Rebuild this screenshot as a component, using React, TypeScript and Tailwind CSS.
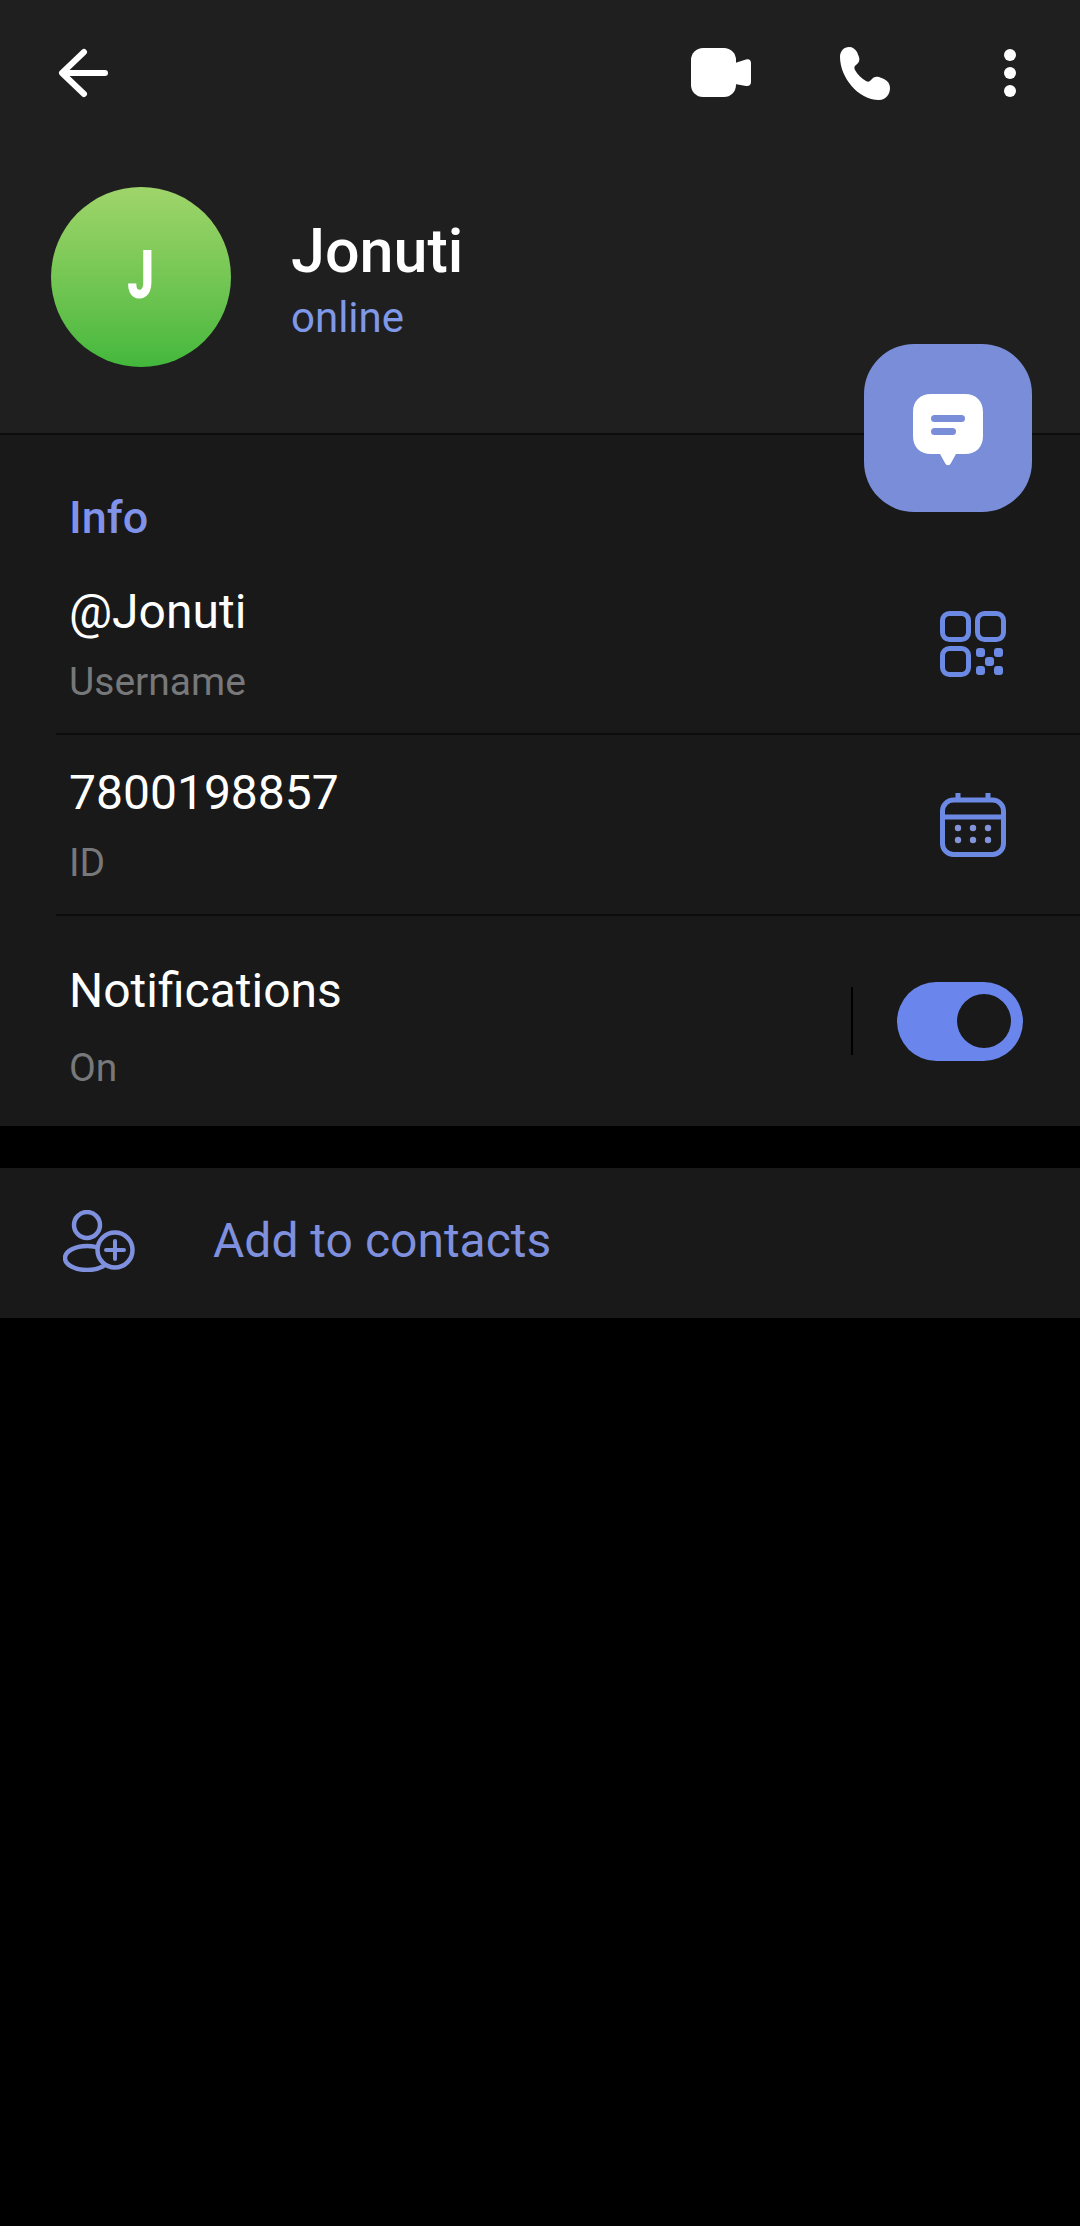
const font = { fontFamily: "Roboto, sans-serif" };

export default function App() {
  return (
    <div style={font} className="relative w-[1080px] h-[2226px] bg-black overflow-hidden font-['Roboto']">
      <header className="h-[435px] bg-[#1f1f1f] border-b-2 border-[#0c0c0c] flex flex-col">
        <div className="h-[146px] flex items-center pl-[58px] pr-[64px]">
          <svg width="50" height="50" viewBox="0 0 50 50" fill="none" stroke="white" strokeWidth="6" strokeLinecap="round" strokeLinejoin="round">
            <path d="M26 4 4 25l22 21M5 25h42" />
          </svg>
          <div className="ml-auto flex items-center">
            <svg width="60" height="50" viewBox="0 0 60 50" fill="white">
              <rect x="0" y="0" width="45" height="49" rx="12" />
              <path d="M44 15 55 11.500c3-1 5 .5 5 3.500v19c0 3-2 4.500-5 4l-11-2Z" />
            </svg>
            <svg className="ml-[87px]" width="54" height="54" viewBox="0 0 54 54" fill="white">
              <path d="M2 11C2 5 6 1 11 1c4 0 6 2 8 5l2 5c1 3 0 6-3 8-2 1-2 3-1 5 3 5 6 8 11 11 2 1 3 1 5-1 2-3 5-4 8-3l5 2c4 2 6 5 6 9 0 6-4 12-11 12C20 54 2 31 2 11Z" />
            </svg>
            <div className="ml-[112px] w-[12px] flex flex-col gap-[6px]">
              <div className="w-[12px] h-[12px] rounded-full bg-white" />
              <div className="w-[12px] h-[12px] rounded-full bg-white" />
              <div className="w-[12px] h-[12px] rounded-full bg-white" />
            </div>
          </div>
        </div>
        <div className="mt-[41px] pl-[51px] flex items-center">
          <div className="w-[180px] h-[180px] rounded-full bg-gradient-to-b from-[#9fd56b] to-[#42b83c] flex items-center justify-center text-white">
            <span className="text-[66px] leading-none font-black scale-x-[0.72] inline-block -mt-[2px]">J</span>
          </div>
          <div className="ml-[60px] flex flex-col pt-[6px]">
            <div className="text-[61px] leading-[66px] font-medium text-white">Jonuti</div>
            <div className="text-[42px] leading-[48px] mt-[10px] text-[#7f98e8]">online</div>
          </div>
        </div>
      </header>

      <section className="bg-[#191919] h-[691px] flex flex-col">
        <div className="h-[119px] pl-[69px] pt-[58px] text-[45px] leading-[50px] font-medium text-[#8093e8]">Info</div>
        <div className="ml-[56px] h-[181px] flex items-center justify-between pl-[13px] pr-[74px] border-b-2 border-[#0c0c0c]">
          <div className="flex flex-col">
            <div className="text-[48px] leading-[56px] text-white">@Jonuti</div>
            <div className="text-[39px] leading-[44px] mt-[20px] text-[#77787a]">Username</div>
          </div>
          <svg width="66" height="66" viewBox="0 0 66 66" fill="none" stroke="#6c8ae4" strokeWidth="5">
            <rect x="2.500" y="2.500" width="26" height="26" rx="7" />
            <rect x="37.500" y="2.500" width="26" height="26" rx="7" />
            <rect x="2.500" y="37.500" width="26" height="26" rx="7" />
            <g fill="#6c8ae4" stroke="none">
              <rect x="36" y="37" width="9" height="9" rx="3" />
              <rect x="54" y="37" width="9" height="9" rx="3" />
              <rect x="45" y="46" width="9" height="9" rx="3" />
              <rect x="36" y="55" width="9" height="9" rx="3" />
              <rect x="54" y="55" width="9" height="9" rx="3" />
            </g>
          </svg>
        </div>
        <div className="ml-[56px] h-[181px] flex items-center justify-between pl-[13px] pr-[74px] border-b-2 border-[#0c0c0c]">
          <div className="flex flex-col">
            <div className="text-[48px] leading-[56px] text-white">7800198857</div>
            <div className="text-[39px] leading-[44px] mt-[20px] text-[#77787a]">ID</div>
          </div>
          <svg width="66" height="64" viewBox="0 0 66 64" fill="none" stroke="#6c8ae4" strokeWidth="5">
            <rect x="2.500" y="7" width="61" height="54.500" rx="11" />
            <path d="M3 24h60M18 0v7M48 0v7" />
            <g fill="#8494d8" stroke="none">
              <circle cx="18" cy="35" r="3.200" />
              <circle cx="33" cy="35" r="3.200" />
              <circle cx="48" cy="35" r="3.200" />
              <circle cx="18" cy="47" r="3.200" />
              <circle cx="33" cy="47" r="3.200" />
              <circle cx="48" cy="47" r="3.200" />
            </g>
          </svg>
        </div>
        <div className="h-[208px] flex items-center pl-[69px] pr-[57px]">
          <div className="flex flex-col pt-[12px]">
            <div className="text-[48px] leading-[56px] text-white">Notifications</div>
            <div className="text-[39px] leading-[44px] mt-[27px] text-[#77787a]">On</div>
          </div>
          <div className="ml-auto w-[2px] h-[68px] bg-black mt-[2px]" />
          <div className="ml-[44px] w-[126px] h-[79px] mt-[2px] rounded-full bg-[#6a86ec] flex items-center justify-end pr-[12px]">
            <div className="w-[54px] h-[54px] rounded-full bg-[#191919]" />
          </div>
        </div>
      </section>

      <section className="mt-[42px] h-[150px] bg-[#191919] flex items-center pl-[63px] pb-[4px]">
        <svg width="72" height="62" viewBox="0 0 72 62" fill="none" stroke="#7f90de" strokeWidth="4.500">
          <ellipse cx="24" cy="15" rx="13" ry="13" />
          <ellipse cx="24" cy="48" rx="22" ry="12" />
          <circle cx="52" cy="40" r="17.500" fill="#191919" />
          <path d="M52 31v18M43 40h18" strokeWidth="4" strokeLinecap="round" />
        </svg>
        <div className="ml-[78px] text-[48px] leading-[54px] text-[#7f90de]">Add to contacts</div>
      </section>

      <div className="absolute left-[864px] top-[344px] w-[168px] h-[168px] rounded-[50px] bg-[#7a8dd9] flex items-center justify-center">
        <svg className="mt-[4px]" width="70" height="72" viewBox="0 0 70 72" fill="white">
          <path d="M18 0h34c11 0 18 7 18 18v24c0 11-7 18-18 18H43l-5 9c-1.500 3-4.500 3-6 0l-5-9h-9C7 60 0 53 0 42V18C0 7 7 0 18 0Z" />
          <g fill="#7a8dd9">
            <rect x="18" y="21" width="34" height="7" rx="3.500" />
            <rect x="18" y="34" width="25" height="7" rx="3.500" />
          </g>
        </svg>
      </div>
    </div>
  );
}
